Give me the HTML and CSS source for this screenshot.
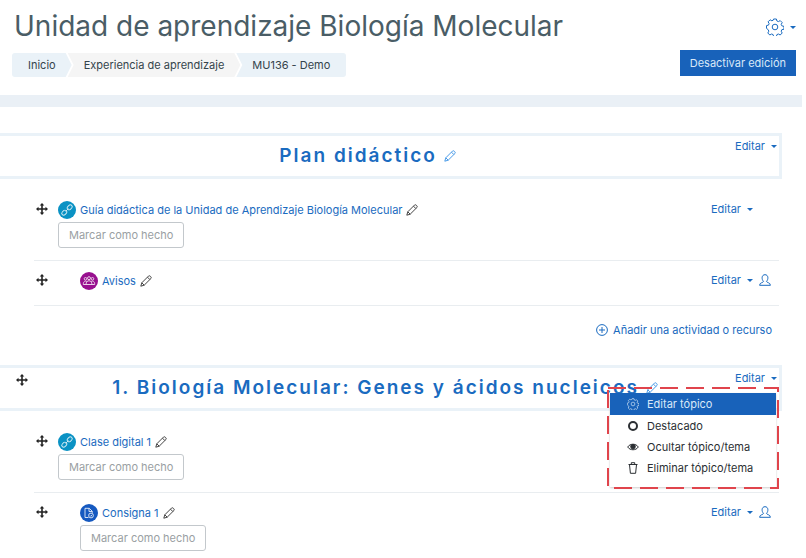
FILE: index.html
```
<!DOCTYPE html>
<html lang="es">
<head>
    <meta charset="UTF-8">
    <meta name="viewport" content="width=device-width, initial-scale=1.0">
    <title>Unidad de aprendizaje Biología Molecular</title>
    <link rel="stylesheet" href="styles.css">
</head>
<body>
<svg class="sprite" aria-hidden="true">
    <symbol id="gear" viewBox="0 0 18 18">
        <path d="M7.6 1h2.8l.5 2 1.5.6 1.8-1 2 2-1 1.8.6 1.4 2.2.6v2.8l-2.200.5-.6 1.500 1 1.800-2 2-1.800-1-1.500.6-.5 2H7.600l-.5-2-1.500-.6-1.800 1-2-2 1-1.800-.6-1.500L.5 10.400V7.600l2-.5.6-1.500-1-1.800 2-2 1.800 1 1.300-.6z"/>
        <circle cx="9" cy="9" r="2.800"/>
    </symbol>
    <symbol id="move" viewBox="0 0 12 12">
        <path d="M6 0l2.300 2.500H6.800v2.700h2.700V3.700L12 6 9.500 8.300V6.800H6.800v2.700h1.500L6 12 3.700 9.500h1.500V6.800H2.500v1.500L0 6l2.500-2.300v1.500h2.700V2.500H3.700z"/>
    </symbol>
    <symbol id="pencil" viewBox="0 0 12 12">
        <path d="M.8 11.200l1-3.400L8.700.9c.9-.8 3.200 1.400 2.400 2.400L4.200 10.200zM7.500 2.200l2.300 2.300M1.800 7.800l2.400 2.400"/>
    </symbol>
    <symbol id="person" viewBox="0 0 12 12">
        <path d="M4.500 7.400C2.400 5.300 2.500.7 6 .7s3.600 4.600 1.500 6.700c0 1.300 3.900 1 3.900 3.900H.6c0-2.900 3.900-2.600 3.900-3.900z"/>
    </symbol>
    <symbol id="link" viewBox="0 0 18 18">
        <circle class="disc" cx="9" cy="9" r="9"/>
        <g class="thin">
            <rect x="-2.800" y="-1.900" width="5.600" height="3.800" rx="1.900" transform="translate(6.300 11.700) rotate(-45)"/>
            <rect x="-2.800" y="-1.900" width="5.600" height="3.800" rx="1.900" transform="translate(11.700 6.300) rotate(-45)"/>
            <path d="M7.600 10.400l2.800-2.800"/>
        </g>
    </symbol>
    <symbol id="people" viewBox="0 0 18 18">
        <circle class="disc" cx="9" cy="9" r="9"/>
        <g class="thin">
            <circle cx="5.500" cy="6.800" r="1.300"/>
            <circle cx="9" cy="6.200" r="1.500"/>
            <circle cx="12.500" cy="6.800" r="1.300"/>
            <path d="M3.300 12.500c0-4 3-4 3.700-2.500M14.700 12.500c0-4-3-4-3.700-2.500M6 12.500c0-5 6-5 6 0M3.300 12.500h11.400"/>
        </g>
    </symbol>
    <symbol id="task" viewBox="0 0 18 18">
        <circle class="disc" cx="9" cy="9" r="9"/>
        <g class="thin">
            <path d="M8.500 13.500H5V4.300h4.300l3 3v1.500M9 4.300v3.200h3.200"/>
            <circle cx="11" cy="11.500" r="2.400"/>
            <path d="M10 11.500l.8.800 1.400-1.500"/>
        </g>
    </symbol>
    <symbol id="plus" viewBox="0 0 12 12">
        <circle cx="6" cy="6" r="5.400"/>
        <path d="M6 3v6M3 6h6"/>
    </symbol>
    <symbol id="eye" viewBox="0 0 12 12">
        <path d="M.7 6C3 2.300 9 2.300 11.300 6 9 9.700 3 9.700.7 6z"/>
        <circle class="pupil" cx="6" cy="5.600" r="2.300"/>
    </symbol>
    <symbol id="trash" viewBox="0 0 12 12">
        <path d="M1.500 2.500h9M4.300 2.300V.7h3.400v1.600M2.500 2.700l.9 8.600h5.200l.9-8.600"/>
    </symbol>
    <symbol id="ring" viewBox="0 0 12 12">
        <circle cx="6" cy="6" r="4"/>
    </symbol>
</svg>

<header class="page-header">
    <div class="heading">
        <h1>Unidad de aprendizaje Biología Molecular</h1>
        <nav class="breadcrumb">
            <a href="#">Inicio</a>
            <a href="#">Experiencia de aprendizaje</a>
            <a href="#">MU136 - Demo</a>
        </nav>
    </div>
    <div class="tools">
        <button class="settings" aria-label="Configuración"><svg><use href="#gear"/></svg><span class="caret"></span></button>
        <button class="edit-mode">Desactivar edición</button>
    </div>
</header>

<main>
    <section>
        <div class="topic">
            <h2>Plan didáctico <a href="#" class="rename" aria-label="Editar nombre"><svg class="icon"><use href="#pencil"/></svg></a></h2>
            <button class="edit">Editar <span class="caret"></span></button>
        </div>
        <ul class="activities">
            <li>
                <svg class="icon move"><use href="#move"/></svg>
                <div class="activity">
                    <div class="name">
                        <svg class="badge url"><use href="#link"/></svg>
                        <a href="#">Guía didáctica de la Unidad de Aprendizaje Biología Molecular</a>
                        <svg class="icon"><use href="#pencil"/></svg>
                    </div>
                    <button class="done">Marcar como hecho</button>
                </div>
                <div class="actions">
                    <button class="edit">Editar <span class="caret"></span></button>
                </div>
            </li>
            <li>
                <svg class="icon move"><use href="#move"/></svg>
                <div class="activity indent">
                    <div class="name">
                        <svg class="badge forum"><use href="#people"/></svg>
                        <a href="#">Avisos</a>
                        <svg class="icon"><use href="#pencil"/></svg>
                    </div>
                </div>
                <div class="actions">
                    <button class="edit">Editar <span class="caret"></span></button>
                    <svg class="icon"><use href="#person"/></svg>
                </div>
            </li>
        </ul>
        <a href="#" class="add"><svg class="icon"><use href="#plus"/></svg>Añadir una actividad o recurso</a>
    </section>

    <section>
        <div class="topic">
            <svg class="icon move"><use href="#move"/></svg>
            <h2>1. Biología Molecular: Genes y ácidos nucleicos <a href="#" class="rename" aria-label="Editar nombre"><svg class="icon"><use href="#pencil"/></svg></a></h2>
            <button class="edit">Editar <span class="caret"></span></button>
            <div class="menu">
                <a href="#" class="active"><svg class="icon"><use href="#gear"/></svg>Editar tópico</a>
                <a href="#"><svg class="icon bold"><use href="#ring"/></svg>Destacado</a>
                <a href="#"><svg class="icon"><use href="#eye"/></svg>Ocultar tópico/tema</a>
                <a href="#"><svg class="icon"><use href="#trash"/></svg>Eliminar tópico/tema</a>
                <svg class="highlight"><rect x="1" y="1"/></svg>
            </div>
        </div>
        <ul class="activities">
            <li>
                <svg class="icon move"><use href="#move"/></svg>
                <div class="activity">
                    <div class="name">
                        <svg class="badge url"><use href="#link"/></svg>
                        <a href="#">Clase digital 1</a>
                        <svg class="icon"><use href="#pencil"/></svg>
                    </div>
                    <button class="done">Marcar como hecho</button>
                </div>
            </li>
            <li>
                <svg class="icon move"><use href="#move"/></svg>
                <div class="activity indent">
                    <div class="name">
                        <svg class="badge assign"><use href="#task"/></svg>
                        <a href="#">Consigna 1</a>
                        <svg class="icon"><use href="#pencil"/></svg>
                    </div>
                    <button class="done">Marcar como hecho</button>
                </div>
                <div class="actions">
                    <button class="edit">Editar <span class="caret"></span></button>
                    <svg class="icon"><use href="#person"/></svg>
                </div>
            </li>
        </ul>
    </section>
</main>
</body>
</html>
```
FILE: styles.css
```
* {
    box-sizing: border-box;
}

body {
    margin: 0;
    background-color: white;
    color: #34444c;
    font-family: Inter, "Liberation Sans", sans-serif;
    font-size: 11px;
    line-height: 16px;
}

a {
    color: #1a6bc0;
    text-decoration: none;
}

button {
    font: inherit;
    border: none;
    background: none;
    padding: 0;
    cursor: pointer;
}

svg {
    fill: none;
    stroke: currentColor;
    stroke-width: 1px;
}

.sprite {
    display: none;
}

.icon {
    width: 12px;
    height: 12px;
    flex: none;
}

.move {
    fill: #222;
    stroke: none;
}

.caret {
    border: 3px solid transparent;
    border-top-color: currentColor;
    border-bottom: none;
}

.page-header {
    display: flex;
    justify-content: space-between;
    padding: 6px 10px 18px 12px;
}

h1 {
    margin: 0 0 7px 2px;
    color: #4a5d66;
    font-size: 28px;
    font-weight: 400;
    line-height: 40px;
}

.breadcrumb {
    display: flex;
}

.breadcrumb a {
    padding: 4px 16px;
    background-color: #eaf2f8;
    color: #34444c;
    clip-path: polygon(0 0, 100% 0, 100% 100%, 0 100%, 6px 50%);
}

.breadcrumb a:first-child {
    border-radius: 3px 0 0 3px;
    clip-path: polygon(0 0, calc(100% - 6px) 0, 100% 50%, calc(100% - 6px) 100%, 0 100%);
}

.breadcrumb a:nth-child(2) {
    margin: 0 -4px;
    background-color: #f5f5f5;
    clip-path: polygon(0 0, calc(100% - 6px) 0, 100% 50%, calc(100% - 6px) 100%, 0 100%, 6px 50%);
}

.breadcrumb a:last-child {
    border-radius: 0 3px 3px 0;
}

.tools {
    display: flex;
    flex-direction: column;
    align-items: flex-end;
    gap: 14px;
    padding-top: 12px;
}

.settings {
    display: flex;
    align-items: center;
    gap: 6px;
    color: #1a6bc0;
}

.settings svg {
    width: 18px;
    height: 18px;
}

.edit-mode {
    padding: 5px 10px;
    background-color: #1862ba;
    color: #d8e8f8;
}

main {
    margin-right: 4px;
    border-top: 12px solid #eaf0f6;
    padding: 26px 20px 0 0;
}

section {
    margin-bottom: 27px;
}

section:last-child {
    margin-bottom: 0;
}

.topic {
    position: relative;
    display: flex;
    align-items: flex-start;
    border: 3px solid #eaf2f8;
    border-left: none;
    padding: 2px 2px 2px 0;
}

.topic .move {
    margin: 4px 7px 0 16px;
}

h2 {
    flex: 1;
    margin: 0;
    color: #1a6bc0;
    font-size: 19px;
    font-weight: 600;
    line-height: 36px;
    letter-spacing: 2px;
    text-align: center;
}

.rename {
    color: #4a9be8;
}

.edit {
    display: flex;
    align-items: center;
    gap: 6px;
    color: #1a6bc0;
}

.activities {
    list-style: none;
    margin: 11px 0 0 34px;
    padding: 0 3px 0 0;
}

.activities li {
    display: flex;
    align-items: flex-start;
    padding: 11px 0 12px 2px;
    border-bottom: 1px solid #e9edf0;
}

section:last-child li:last-child {
    padding-bottom: 0;
    border-bottom: none;
}

.activities .move {
    margin: 2px 10px 0 0;
}

.activity {
    flex: 1;
}

.indent {
    margin-left: 22px;
}

.name {
    display: flex;
    align-items: center;
    gap: 4px;
    height: 18px;
    margin-bottom: 3px;
    color: #444;
}

.badge {
    width: 18px;
    height: 18px;
    color: white;
}

.badge,
.badge + a {
    flex: none;
}

.thin {
    stroke-width: 1px;
    opacity: .8;
}

.disc {
    fill: var(--disc);
    stroke: none;
}

.url {
    --disc: #0a92c4;
}

.forum {
    --disc: #98108f;
}

.assign {
    --disc: #1559c0;
}

.done {
    display: block;
    border: 1px solid #c3c8cc;
    border-radius: 3px;
    padding: 4px 10px;
    color: #9a9fa3;
}

.actions {
    display: flex;
    align-items: center;
    gap: 6px;
    width: 68px;
    color: #1a6bc0;
}

.add {
    display: flex;
    align-items: center;
    justify-content: flex-end;
    gap: 5px;
    padding: 16px 10px 0 0;
}

.menu {
    position: absolute;
    top: 25px;
    right: 3px;
    width: 166px;
    padding-bottom: 9px;
    background-color: white;
    box-shadow: 0 1px 2px #ccc;
}

.menu a {
    display: flex;
    align-items: center;
    gap: 8px;
    padding: 3px 17px 2px;
    color: #2b2f33;
}

.menu .active {
    padding-bottom: 3px;
    background-color: #1862ba;
    color: #d8e8f8;
}

.bold {
    stroke-width: 2px;
}

.pupil {
    fill: currentColor;
}

/* dashed frame round the open menu */
.highlight {
    position: absolute;
    top: -6px;
    left: -3px;
    width: calc(100% + 6px);
    height: calc(100% + 8px);
    pointer-events: none;
}

.highlight rect {
    width: calc(100% - 2px);
    height: calc(100% - 2px);
    stroke: #e0444c;
    stroke-width: 2px;
    stroke-dasharray: 18 8;
}
```
